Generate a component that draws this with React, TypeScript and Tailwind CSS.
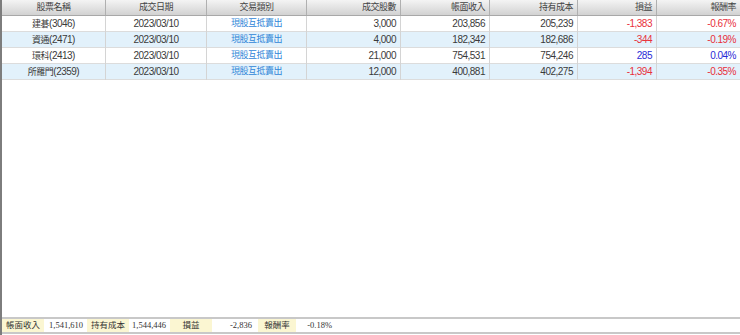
import React from "react";

type Row = {
  cjk: string;
  code: string;
  date: string;
  kind: string;
  qty: string;
  income: string;
  cost: string;
  pl: string;
  rate: string;
  up: boolean;
};

const rows: Row[] = [
  { cjk: "建碁", code: "(3046)", date: "2023/03/10", kind: "現股互抵賣出", qty: "3,000", income: "203,856", cost: "205,239", pl: "-1,383", rate: "-0.67%", up: false },
  { cjk: "資通", code: "(2471)", date: "2023/03/10", kind: "現股互抵賣出", qty: "4,000", income: "182,342", cost: "182,686", pl: "-344", rate: "-0.19%", up: false },
  { cjk: "環科", code: "(2413)", date: "2023/03/10", kind: "現股互抵賣出", qty: "21,000", income: "754,531", cost: "754,246", pl: "285", rate: "0.04%", up: true },
  { cjk: "所羅門", code: "(2359)", date: "2023/03/10", kind: "現股互抵賣出", qty: "12,000", income: "400,881", cost: "402,275", pl: "-1,394", rate: "-0.35%", up: false },
];

const cols = "grid grid-cols-[104px_101px_100px_94px_89px_88px_79px_83px]";

const App = () => {
  return (
    <div className="w-[740px] h-[335px] bg-white flex flex-col border-l-2 border-[#7d7d7d] text-[10px] tracking-[-0.5px] text-[#3a3a3a] font-['Liberation_Sans','Noto_Sans_CJK_TC',sans-serif]">
      {/* Table */}
      <div className="flex-1">
        <div className={`${cols} h-4 bg-gradient-to-b from-[#f4f4f4] to-[#d2d2d2] border-b border-[#a8a8a8] leading-[15px] text-[9px] text-[#444]`}>
          <div className="text-center border-r border-[#b0b0b0]">股票名稱</div>
          <div className="text-center border-r border-[#b0b0b0]">成交日期</div>
          <div className="text-center border-r border-[#b0b0b0]">交易類別</div>
          <div className="text-right pr-1 border-r border-[#b0b0b0]">成交股數</div>
          <div className="text-right pr-1 border-r border-[#b0b0b0]">帳面收入</div>
          <div className="text-right pr-1 border-r border-[#b0b0b0]">持有成本</div>
          <div className="text-right pr-1 border-r border-[#b0b0b0]">損益</div>
          <div className="text-right pr-1">報酬率</div>
        </div>
        {rows.map((r, i) => {
          const color = r.up ? "text-[#2a2ad6]" : "text-[#e8303a]";
          return (
            <div
              key={r.code}
              className={`${cols} h-4 leading-[15px] border-b border-[#dcdcdc] ${i % 2 === 1 ? "bg-[#e2f1fb]" : "bg-white"}`}
            >
              <div className="text-center border-r border-[#d4d4d4]">
                <span className="text-[9px]">{r.cjk}</span>
                {r.code}
              </div>
              <div className="text-center border-r border-[#d4d4d4]">{r.date}</div>
              <div className="text-center border-r border-[#d4d4d4] text-[9px] text-[#2f86d8]">{r.kind}</div>
              <div className="text-right pr-1 border-r border-[#d4d4d4]">{r.qty}</div>
              <div className="text-right pr-1 border-r border-[#d4d4d4]">{r.income}</div>
              <div className="text-right pr-1 border-r border-[#d4d4d4]">{r.cost}</div>
              <div className={`text-right pr-1 border-r border-[#d4d4d4] ${color}`}>{r.pl}</div>
              <div className={`text-right pr-1 ${color}`}>{r.rate}</div>
            </div>
          );
        })}
      </div>

      {/* Summary bar */}
      <div className="h-[17px] border-t-2 border-[#c8c8c8] border-b-2 mb-[1px] flex items-center text-[8.5px] tracking-normal font-['Liberation_Serif','Noto_Sans_CJK_TC',serif] text-[#333]">
        <div className="w-[42px] h-[13px] bg-[#fbf6d2] text-center leading-[13px]">帳面收入</div>
        <div className="w-[43px] text-right pr-1">1,541,610</div>
        <div className="w-[42px] h-[13px] bg-[#fbf6d2] text-center leading-[13px]">持有成本</div>
        <div className="w-[41px] text-right pr-1">1,544,446</div>
        <div className="w-[42px] h-[13px] bg-[#fbf6d2] text-center leading-[13px]">損益</div>
        <div className="w-[44px] text-right pr-1">-2,836</div>
        <div className="w-[38px] h-[13px] bg-[#fbf6d2] text-center leading-[13px] ml-[2px]">報酬率</div>
        <div className="w-[40px] text-right pr-1">-0.18%</div>
      </div>
    </div>
  );
};

export default App;
